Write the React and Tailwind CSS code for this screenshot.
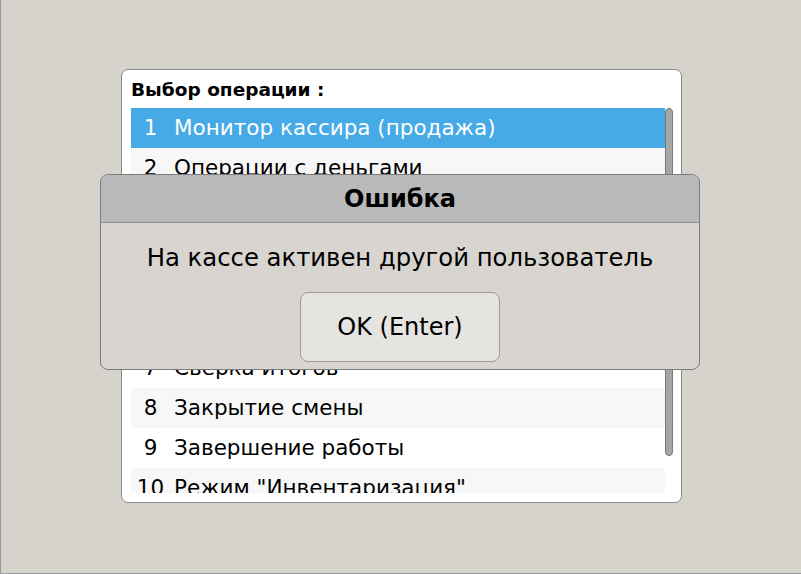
import React from 'react';

const items = [
  'Монитор кассира (продажа)',
  'Операции с деньгами',
  'Отчёты',
  'Возврат продажи',
  'Аннулирование чека',
  'Печать копии чека',
  'Сверка итогов',
  'Закрытие смены',
  'Завершение работы',
  'Режим "Инвентаризация"',
];

const font = { fontFamily: '"DejaVu Sans", sans-serif' };

export default function App() {
  return (
    <div
      className="relative w-[801px] h-[574px] bg-[#d6d2cc] border-l border-b border-[#9a9a9a] flex items-center justify-start overflow-hidden"
      style={font}
    >
      {/* operation menu panel */}
      <div className="w-[561px] h-[434px] ml-[120px] mt-[-1px] bg-white border border-[#8a8a8a] rounded-[7px] pl-[9px] pr-[8px] pt-[8px] pb-[9px] flex flex-col">
        <div className="text-[18.5px] font-bold text-black leading-[24px] h-[30px] whitespace-nowrap">Выбор операции :</div>
        <div className="flex flex-1 min-h-0">
          <div className="flex-1 overflow-hidden">
            {items.map((t, i) => (
              <div
                key={i}
                className={`h-[40px] flex items-center text-[21.5px] ${
                  i === 0 ? 'bg-[#45aae6] text-white' : i % 2 === 1 ? 'bg-[#f7f7f7] text-black' : 'bg-white text-black'
                }`}
              >
                <span className="w-[39px] text-center whitespace-nowrap">{i + 1}</span>
                <span className="ml-[4px] whitespace-nowrap">{t}</span>
              </div>
            ))}
          </div>
          <div className="w-[8px]">
            <div className="h-[348px] bg-[#a6a6a6] border border-[#7a7a7a] rounded-full"></div>
          </div>
        </div>
      </div>

      {/* error dialog */}
      <div className="absolute left-[99px] top-[174px] w-[600px] h-[196px] bg-[#d8d5d1] border border-[#7c7c7c] rounded-[8px] overflow-hidden flex flex-col">
        <div className="h-[48px] bg-[#b9b9b9] border-b border-[#8c8c8c] flex items-center justify-center text-[24px] font-bold text-black">
          Ошибка
        </div>
        <div className="flex-1 flex flex-col items-center">
          <div className="mt-[20px] text-[24.3px] text-black leading-[30px] whitespace-nowrap">На кассе активен другой пользователь</div>
          <button className="mt-[19px] w-[200px] h-[70px] bg-[#e6e4e0] border border-[#9a9a9a] rounded-[8px] text-[24px] text-black">
            OK (Enter)
          </button>
        </div>
      </div>
    </div>
  );
}
